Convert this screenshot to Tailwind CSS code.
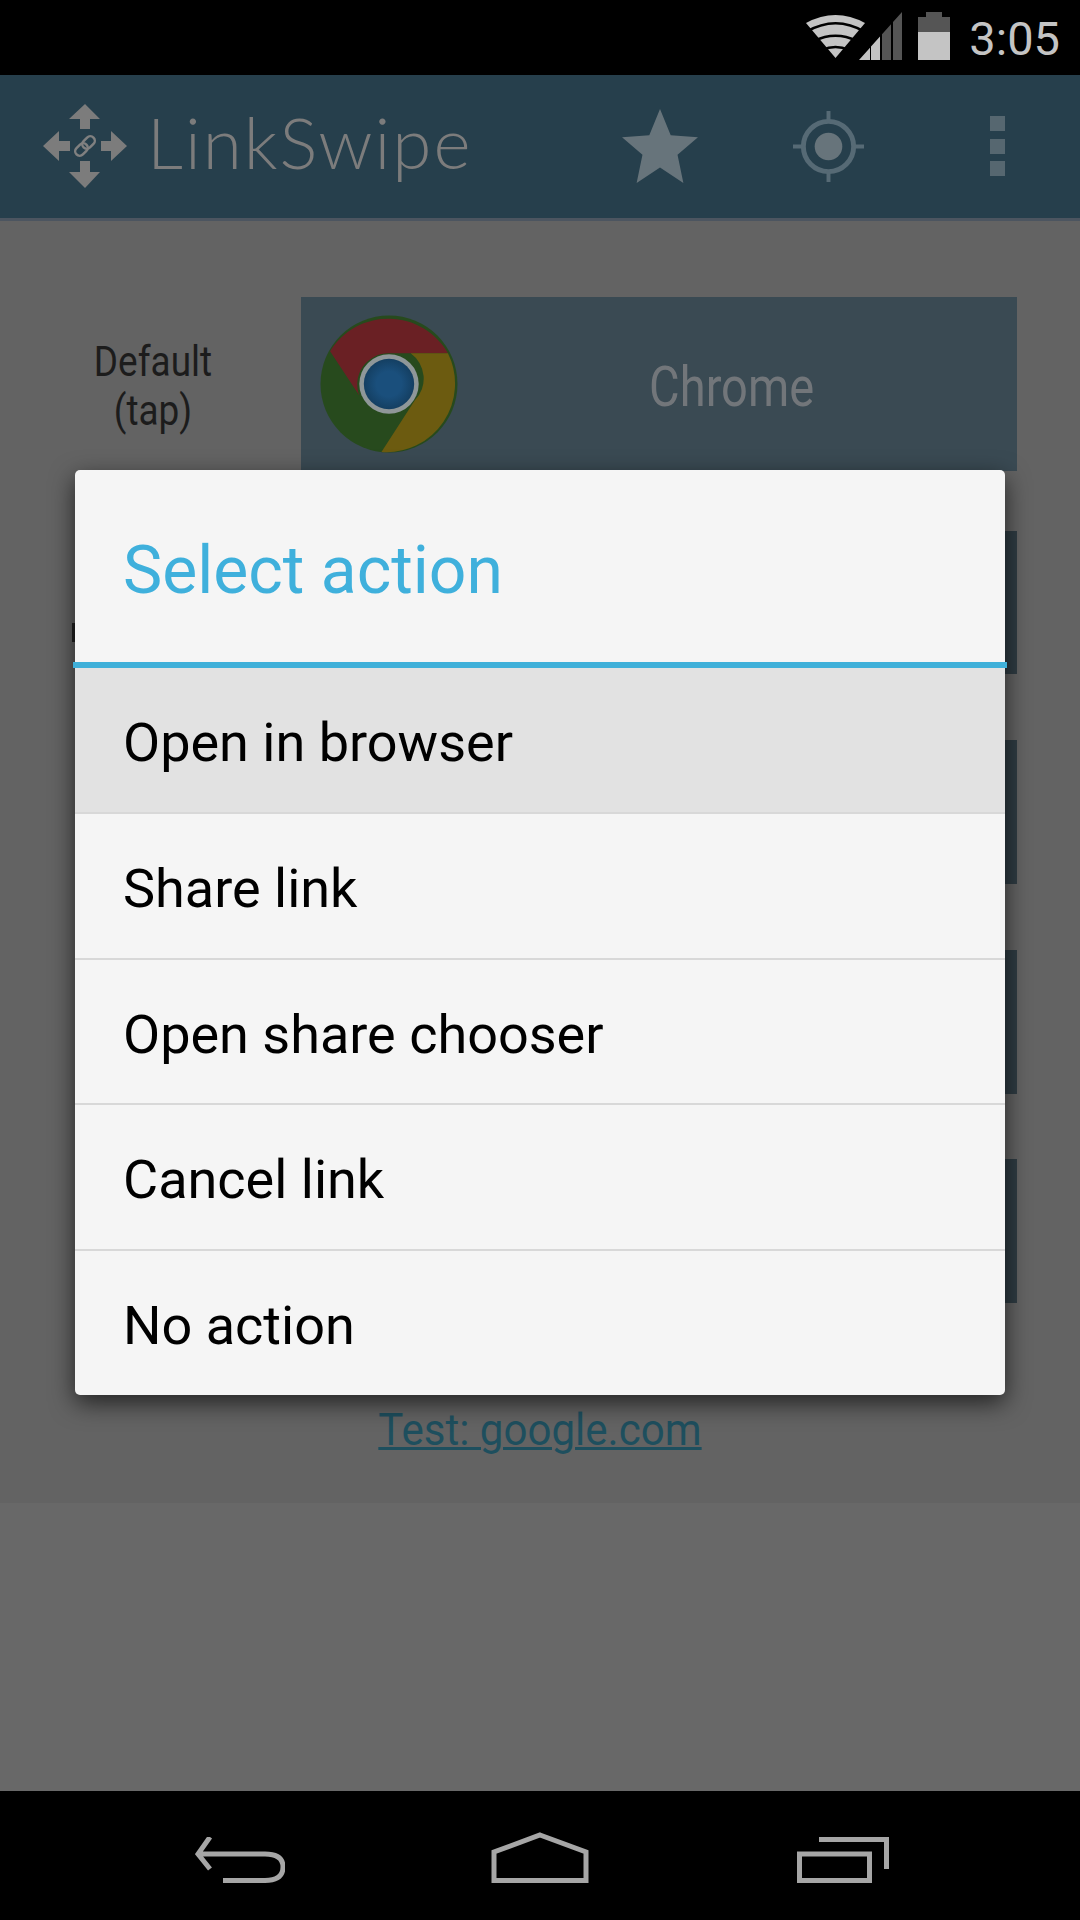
<!DOCTYPE html>
<html lang="en">
<head>
  <meta charset="UTF-8">
  <meta name="viewport" content="width=device-width, initial-scale=1.0">
  <title>LinkSwipe</title>
  <script src="https://cdn.jsdelivr.net/npm/@tailwindcss/browser@4"></script>
</head>
<body class="bg-black">
  <div class="relative w-[1080px] h-[1920px] overflow-hidden flex flex-col font-['Roboto',sans-serif] bg-[#686868]">
    <!-- status bar -->
    <div class="h-[75px] bg-black flex items-center justify-end pr-[20px] gap-[19px]">
      <svg class="w-[144px] h-[48px] mt-[-3px]" viewBox="0 0 144 48">
        <path d="M0 11 Q29.5 -5 59 11 L29.5 46 Z" fill="#c4c4c4"/>
        <path d="M0 20 Q29.5 2.6 59 20 M8 29 Q29.5 18.4 51 29 M16 38 Q29.5 32 43 38" fill="none" stroke="#000" stroke-width="2.5"/>
        <path d="M53 48 L64 35.7 V48 Z M65 34.6 L74 24.6 V48 H65 Z" fill="#c4c4c4"/>
        <path d="M76 22.3 L85 12.3 V48 H76 Z M87 10 L96 0 V48 H87 Z" fill="#555"/>
        <path d="M120 0 H136 V5 H144 V20 H112 V5 H120 Z" fill="#555"/>
        <rect x="112" y="20" width="32" height="28" fill="#c4c4c4"/>
      </svg>
      <span class="text-[47px] leading-none text-[#c4c4c4] mt-[1px]">3:05</span>
    </div>
    <!-- action bar -->
    <div class="h-[146px] bg-[#263f4c] border-b-[3px] border-[#4c5560] flex items-center pb-[1px]">
      <svg class="ml-[43px] w-[84px] h-[84px]" viewBox="0 0 84 84" fill="#7c7c7c">
        <path d="M42 0 L57 15 H47 V25 H37 V15 H26 Z"/>
        <path d="M42 84 L57 68 H47 V57 H37 V68 H26 Z"/>
        <path d="M0 42 L16 27 V37 H27 V47 H16 V57 Z"/>
        <path d="M84 42 L68 27 V37 H58 V47 H68 V57 Z"/>
        <g fill="none" stroke="#808080" stroke-width="2.5" transform="rotate(-45 42 42)">
          <rect x="30" y="37.5" width="14" height="9" rx="4.5"/>
          <rect x="40" y="37.5" width="14" height="9" rx="4.5"/>
        </g>
      </svg>
      <span class="ml-[20px] mt-[-9px] text-[71px] leading-none font-light text-[#7c7c7c] font-['Lato',sans-serif] w-[330px] tracking-[2px]">LinkSwipe</span>
      <svg class="ml-[144px] w-[78px] h-[74px]" viewBox="0 0 78 76"><path d="M39 0 L50 27 L78 29 L57 47 L63 76 L39 60 L15 76 L21 47 L0 29 L28 27 Z" fill="#67747b"/></svg>
      <svg class="ml-[94px] w-[71px] h-[71px]" viewBox="0 0 72 72">
        <circle cx="36" cy="36" r="25.5" fill="none" stroke="#566a75" stroke-width="5"/>
        <circle cx="36" cy="36" r="14" fill="#67747b"/>
        <path d="M36 0 V11 M36 61 V72 M0 36 H11 M61 36 H72" stroke="#566a75" stroke-width="4"/>
      </svg>
      <div class="ml-[126px] flex flex-col gap-[7.5px]">
        <div class="w-[15px] h-[15px] bg-[#566770]"></div>
        <div class="w-[15px] h-[15px] bg-[#566770]"></div>
        <div class="w-[15px] h-[15px] bg-[#566770]"></div>
      </div>
    </div>
    <!-- page content, dimmed -->
    <div class="h-[1282px] bg-[#636363] flex flex-col pt-[76px] pl-[38px] pr-[63px]">
      <div class="flex items-center h-[174px]">
        <div class="w-[230px] pt-[4px] text-center text-[42px] leading-[49px] text-[#1c1c1c] scale-x-[0.88]">Default<br>(tap)</div>
        <div class="ml-[33px] flex-1 h-full bg-[#3a4a53] flex items-center pl-[19px]">
          <svg class="w-[138px] h-[138px] shrink-0" viewBox="0 0 137 137">
            <defs>
              <radialGradient id="chromeBlue"><stop offset="0.5" stop-color="#1a4f7c"/><stop offset="1" stop-color="#143f62"/></radialGradient>
            </defs>
            <circle cx="68.5" cy="68.5" r="68" fill="#274a1d"/>
            <path d="M10 36 A68 68 0 0 1 127 38 H68.5 A31 31 0 0 0 39 80 Z" fill="#6a2024"/>
            <path d="M127 38 A68 68 0 0 1 61 136 L94 85 A31 31 0 0 0 90 38 Z" fill="#6c5b10"/>
            <circle cx="68.5" cy="68.5" r="29.5" fill="#8f9799"/>
            <circle cx="68.5" cy="68.5" r="25" fill="url(#chromeBlue)"/>
          </svg>
          <span class="flex-1 pt-[6px] pr-[14px] text-center text-[56px] leading-none text-[#72767a] scale-x-[0.84]">Chrome</span>
        </div>
      </div>
      <div class="ml-[263px] mt-[60px] h-[143px] bg-[#2f3c43]"></div>
      <div class="ml-[263px] mt-[66px] h-[144px] bg-[#2f3c43]"></div>
      <div class="ml-[263px] mt-[66px] h-[144px] bg-[#2f3c43]"></div>
      <div class="ml-[263px] mt-[65px] h-[144px] bg-[#2f3c43]"></div>
      <a class="mt-[104px] ml-[-38px] mr-[-63px] text-center text-[45px] leading-none text-[#1e4f5e] underline decoration-[3px] scale-x-[0.935]">Test: google.com</a>
    </div>
    <div class="flex-1 bg-[#686868]"></div>
    <!-- nav bar -->
    <div class="h-[129px] bg-black relative">
      <svg class="absolute left-[195px] top-[46px] w-[90px] h-[46px]" viewBox="0 0 90 46" fill="none" stroke="#a6a6a6" stroke-width="5">
        <path d="M15 0 L3 17 L15 32 M3 17 H70 Q88 17 88 30 Q88 43.5 70 43.5 H28"/>
      </svg>
      <svg class="absolute left-[491px] top-[41px] w-[98px] h-[51px]" viewBox="0 0 98 51" fill="none" stroke="#a6a6a6" stroke-width="5">
        <path d="M49 3 L95 20 V48.5 H3 V20 Z"/>
      </svg>
      <svg class="absolute left-[797px] top-[46px] w-[92px] h-[46px]" viewBox="0 0 92 46" fill="none" stroke="#a6a6a6" stroke-width="5">
        <path d="M22 2.5 H89.5 V32"/>
        <rect x="2.5" y="17" width="70" height="26.5"/>
      </svg>
    </div>
    <!-- bit of a row label showing past the dialog edge -->
    <div class="absolute left-[72px] top-[623px] w-[4px] h-[19px] bg-[#222]"></div>
    <!-- dialog -->
    <div class="absolute left-[75px] top-[470px] w-[930px] h-[925px] bg-[#f5f5f5] rounded-[5px] shadow-[0_8px_24px_rgba(0,0,0,0.65)] flex flex-col">
      <div class="h-[192px] flex items-center pl-[48px] pt-[9px] text-[66px] leading-none text-[#3fb0dc] shrink-0">Select action</div>
      <div class="h-[6px] mx-[-2px] bg-[#3fb0d9] shrink-0"></div>
      <div class="h-[146px] bg-[#e2e2e2] border-b-[2px] border-[#d8d8d8] flex items-center pl-[48px] pt-[5px] text-[54px] text-black">Open in browser</div>
      <div class="h-[146px] border-b-[2px] border-[#d8d8d8] flex items-center pl-[48px] pt-[5px] text-[54px] text-black">Share link</div>
      <div class="h-[145px] border-b-[2px] border-[#d8d8d8] flex items-center pl-[48px] pt-[5px] text-[54px] text-black">Open share chooser</div>
      <div class="h-[146px] border-b-[2px] border-[#d8d8d8] flex items-center pl-[48px] pt-[5px] text-[54px] text-black">Cancel link</div>
      <div class="h-[144px] flex items-center pl-[48px] pt-[5px] text-[54px] text-black">No action</div>
    </div>
  </div>
</body>
</html>
